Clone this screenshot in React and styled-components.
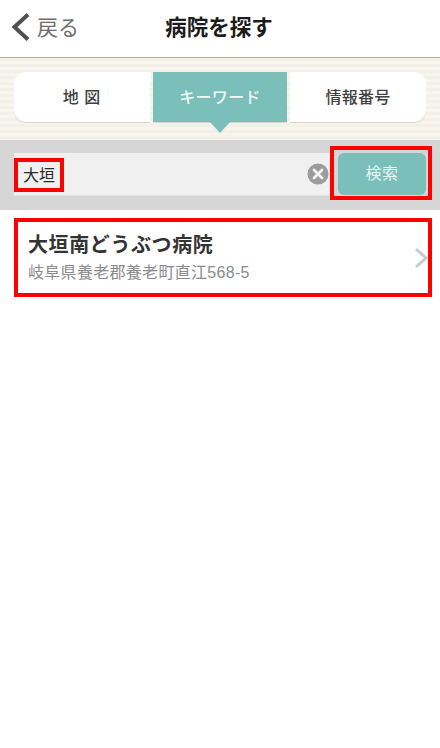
import React from 'react';
import styled, { createGlobalStyle } from 'styled-components';

const Global = createGlobalStyle`
    html, body { margin: 0; padding: 0; background: #fff; }
    body { font-family: "Noto Sans CJK JP", "Liberation Sans", sans-serif; }
`;

const Page = styled.div`
    width: 440px;
    height: 748px;
    overflow: hidden;
    background: #fff;
`;

const Header = styled.header`
    position: relative;
    height: 57px;
    display: flex;
    align-items: center;
    justify-content: center;
    border-bottom: 1px solid #b5b0a3;
    box-sizing: content-box;
`;

const Back = styled.div`
    position: absolute;
    left: 11px;
    top: 12px;
    display: flex;
    align-items: center;
    gap: 7px;
    color: #6e6e6e;
    font-size: 21px;
    line-height: 28px;
`;

const BackLabel = styled.span`
    margin-top: -3px;
`;

const Title = styled.h1`
    margin: 0 0 5px -2px;
    font-size: 21.5px;
    line-height: 30px;
    font-weight: 700;
    color: #1c1c1c;
`;

const TabBand = styled.div`
    height: 82px;
    box-sizing: border-box;
    padding: 14px 14px 0;
    background: repeating-linear-gradient(to bottom, #f3f1e7 0, #f3f1e7 3px, #f7f5ed 3px, #f7f5ed 6px);
`;

const Tabs = styled.div`
    display: grid;
    grid-template-columns: 136px 134px 136px;
    gap: 3px;
    height: 50px;
`;

const Tab = styled.div`
    position: relative;
    display: flex;
    align-items: center;
    justify-content: center;
    padding: 0 ${p => p.$inset || 0} 3px 0;
    box-sizing: border-box;
    font-size: 16px;
    font-weight: 500;
    letter-spacing: ${p => p.$spacing || '0.3px'};
    color: ${p => (p.$active ? '#f2f7f3' : '#3f3f3f')};
    background: ${p => (p.$active ? '#7abfb9' : '#fff')};
    border-radius: ${p => p.$radius || '0'};
    box-shadow: 0 1px 0 #d9d5c6;

    ${p => p.$active && `
        &::after {
            content: "";
            position: absolute;
            left: 57px;
            top: 50px;
            border-style: solid;
            border-width: 11px 10px 0;
            border-color: #7abfb9 transparent transparent;
        }
    `}
`;

const SearchBand = styled.div`
    height: 70px;
    box-sizing: border-box;
    padding: 13px 14px 15px;
    background: #d6d6d6;
    display: flex;
    gap: 8px;
`;

const Field = styled.div`
    flex: 1;
    display: flex;
    align-items: center;
    justify-content: space-between;
    background: #f0f0f0;
    box-shadow: 0 1px 0 #e2e2e2;
`;

const Query = styled.span`
    position: relative;
    width: 50px;
    text-align: center;
    font-size: 16px;
    line-height: 36px;
    margin-top: -1px;
    color: #2a2a2a;
`;

const Highlight = styled.i`
    position: absolute;
    pointer-events: none;
    box-sizing: border-box;
    border: 4px solid #ff0000;
    top: ${p => p.$top}px;
    right: ${p => p.$right}px;
    bottom: ${p => p.$bottom}px;
    left: ${p => p.$left}px;
`;

const SearchButton = styled.button`
    position: relative;
    width: 88px;
    border: 0;
    padding: 0 0 5px;
    border-radius: 6px;
    background: #7abfb9;
    color: #e8f4f1;
    font: 400 16px "Noto Sans CJK JP", sans-serif;
    letter-spacing: 0.5px;
`;

const Results = styled.ul`
    list-style: none;
    margin: 0;
    padding: 12px 12px 0 18px;
`;

const Result = styled.li`
    position: relative;
    height: 71px;
    display: flex;
    align-items: center;
    justify-content: space-between;
`;

const Name = styled.div`
    margin-top: -1px;
    padding-left: 10px;
    font-size: 20px;
    line-height: 30px;
    font-weight: 700;
    letter-spacing: 0.6px;
    color: #333;
`;

const Address = styled.div`
    margin-top: 2px;
    padding-left: 10px;
    font-family: "Liberation Sans", "Noto Sans CJK JP", sans-serif;
    font-size: 16px;
    line-height: 24px;
    letter-spacing: 0.3px;
    color: #8a8a8a;
`;

const ClearIcon = () => (
    <svg width="22" height="22" viewBox="0 0 22 22" style={{ marginRight: 1 }}>
        <circle cx="11" cy="11" r="10.5" fill="#9c9c9c" />
        <path d="M7 7l8 8M15 7l-8 8" stroke="#f4f4f4" strokeWidth="2.8" strokeLinecap="round" />
    </svg>
);

const App = () => (
    <Page>
        <Global />
        <Header>
            <Back>
                <svg width="19" height="30" viewBox="0 0 19 30">
                    <path d="M17 2.5L3.5 15 17 27.5" fill="none" stroke="#505050" strokeWidth="4" />
                </svg>
                <BackLabel>戻る</BackLabel>
            </Back>
            <Title>病院を探す</Title>
        </Header>
        <TabBand>
            <Tabs>
                <Tab $radius="12px 0 0 12px" $spacing="1px">地 図</Tab>
                <Tab $active>キーワード</Tab>
                <Tab $radius="0 12px 12px 0">情報番号</Tab>
            </Tabs>
        </TabBand>
        <SearchBand>
            <Field>
                <Query>
                    大垣
                    <Highlight $top={2} $right={0} $bottom={0} $left={0} />
                </Query>
                <ClearIcon />
            </Field>
            <SearchButton>
                検索
                <Highlight $top={-7} $right={-6} $bottom={-5} $left={-8} />
            </SearchButton>
        </SearchBand>
        <Results>
            <Result>
                <Highlight $top={-4} $right={-4} $bottom={-4} $left={-4} />
                <div>
                    <Name>大垣南どうぶつ病院</Name>
                    <Address>岐阜県養老郡養老町直江568-5</Address>
                </div>
                <svg width="14" height="24" viewBox="0 0 14 24">
                    <path d="M2 3l10 9-10 9" fill="none" stroke="#c9c9c9" strokeWidth="3" />
                </svg>
            </Result>
        </Results>
    </Page>
);

export default App;
